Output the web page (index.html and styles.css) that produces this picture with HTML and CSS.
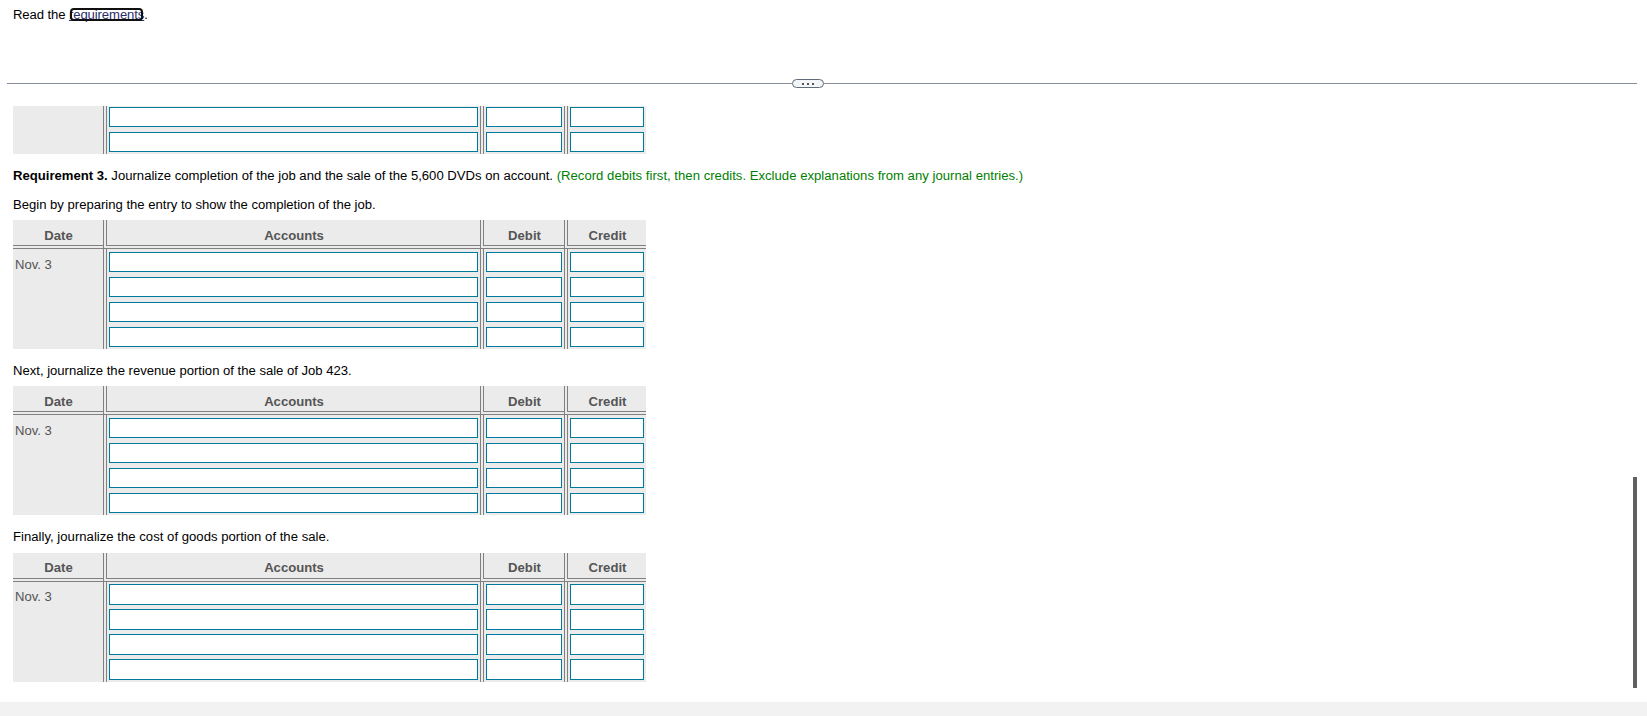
FILE: index.html
```html
<!DOCTYPE html>
<html lang="en">
<head>
  <meta charset="UTF-8">
  <meta name="viewport" content="width=device-width, initial-scale=1.0">
  <title>Journal entries</title>
  <link rel="stylesheet" href="styles.css">
</head>
<body>
  <div class="page">
    <div class="top">
      <p>Read the <a class="link" href="#">requirements</a>.</p>
    </div>
    <div class="divider">
      <span class="line"></span>
      <button class="handle" type="button"><i></i><i></i><i></i></button>
      <span class="line right"></span>
    </div>
    <div class="content">
      <table class="journal cut">
        <tbody>
          <tr><td class="date" rowspan="2"></td><td class="acc"><input type="text"></td><td class="deb"><input type="text"></td><td class="cre"><input type="text"></td></tr>
          <tr><td><input type="text"></td><td><input type="text"></td><td><input type="text"></td></tr>
        </tbody>
      </table>
      <p class="req"><b>Requirement 3.</b> Journalize completion of the job and the sale of the 5,600 DVDs on account. <span class="note">(Record debits first, then credits. Exclude explanations from any journal entries.)</span></p>
      <p class="step">Begin by preparing the entry to show the completion of the job.</p>
      <table class="journal">
        <thead>
          <tr><th class="date">Date</th><th class="acc">Accounts</th><th class="deb">Debit</th><th class="cre">Credit</th></tr>
        </thead>
        <tbody>
          <tr><td class="date" rowspan="4">Nov. 3</td><td><input type="text"></td><td><input type="text"></td><td><input type="text"></td></tr>
          <tr><td><input type="text"></td><td><input type="text"></td><td><input type="text"></td></tr>
          <tr><td><input type="text"></td><td><input type="text"></td><td><input type="text"></td></tr>
          <tr><td><input type="text"></td><td><input type="text"></td><td><input type="text"></td></tr>
        </tbody>
      </table>
      <p class="step">Next, journalize the revenue portion of the sale of Job 423.</p>
      <table class="journal">
        <thead>
          <tr><th class="date">Date</th><th class="acc">Accounts</th><th class="deb">Debit</th><th class="cre">Credit</th></tr>
        </thead>
        <tbody>
          <tr><td class="date" rowspan="4">Nov. 3</td><td><input type="text"></td><td><input type="text"></td><td><input type="text"></td></tr>
          <tr><td><input type="text"></td><td><input type="text"></td><td><input type="text"></td></tr>
          <tr><td><input type="text"></td><td><input type="text"></td><td><input type="text"></td></tr>
          <tr><td><input type="text"></td><td><input type="text"></td><td><input type="text"></td></tr>
        </tbody>
      </table>
      <p class="step last">Finally, journalize the cost of goods portion of the sale.</p>
      <table class="journal tall">
        <thead>
          <tr><th class="date">Date</th><th class="acc">Accounts</th><th class="deb">Debit</th><th class="cre">Credit</th></tr>
        </thead>
        <tbody>
          <tr><td class="date" rowspan="4">Nov. 3</td><td><input type="text"></td><td><input type="text"></td><td><input type="text"></td></tr>
          <tr><td><input type="text"></td><td><input type="text"></td><td><input type="text"></td></tr>
          <tr><td><input type="text"></td><td><input type="text"></td><td><input type="text"></td></tr>
          <tr><td><input type="text"></td><td><input type="text"></td><td><input type="text"></td></tr>
        </tbody>
      </table>
      <div class="scrollbar"></div>
    </div>
    <div class="footer"></div>
  </div>
</body>
</html>
```
FILE: styles.css
```css
*{
  margin: 0;
  padding: 0;
  box-sizing: border-box;
}
body{
  background-color: #fff;
  font-family: "Liberation Sans", Arial, sans-serif;
  font-size: 13.12px;
  line-height: 15px;
  color: #000;
}
.page{
  width: 100%;
  height: 716px;
  overflow: hidden;
  display: flex;
  flex-direction: column;
}
.top{
  height: 79px;
  padding: 7px 13px 0;
  letter-spacing: -0.1px;
}
.link{
  color: #2b2e6b;
  outline: 2px solid #101010;
  outline-offset: -3px;
  border-radius: 5px;
}
.divider{
  height: 9px;
  margin: 0 10px 0 7px;
  display: flex;
  align-items: center;
}
.divider .line{
  width: 785px;
  height: 1px;
  background-color: #868c99;
}
.divider .right{
  flex: 1;
}
.handle{
  width: 32px;
  height: 9px;
  border: 1px solid #5f6b79;
  border-radius: 5px;
  background-color: #f4f5f8;
  display: flex;
  justify-content: center;
  align-items: center;
  gap: 3px;
}
.handle i{
  width: 2px;
  height: 2px;
  background-color: #555;
}
.content{
  height: 614px;
  padding: 18px 13px 0;
  position: relative;
}
.journal{
  width: 633px;
  table-layout: fixed;
  border-collapse: separate;
  border-spacing: 0;
  background-color: #ebebeb;
  color: #555;
}
.journal .date{
  width: 90px;
  border-left: 0;
}
.journal .acc{
  width: 377px;
}
.journal .deb{
  width: 84px;
}
.journal .cre{
  width: 82px;
}
.journal th{
  height: 29px;
  padding: 6px 0 0 1px;
  border-left: 4px double #808080;
  border-bottom: 4px double #808080;
  text-align: center;
}
.journal td{
  height: 25px;
  padding: 3px 2px 2px;
  border-left: 4px double #808080;
  vertical-align: top;
}
.journal td.date{
  padding-top: 8px;
}
.journal input{
  display: block;
  width: 100%;
  height: 20px;
  border: 1px solid #007a9c;
  border-radius: 0;
  background-color: #fff;
}
.journal.cut tr:first-child td{
  height: 23px;
  padding-top: 1px;
}
.journal.tall th{
  padding-top: 4px;
}
.journal.tall td{
  padding-top: 2px;
}
.journal.tall td.date{
  padding-top: 7px;
}
.journal.tall input{
  height: 21px;
}
.req{
  padding-top: 14px;
}
.note{
  color: #008000;
  letter-spacing: 0.02px;
}
.step{
  padding: 14px 0 8px;
  letter-spacing: -0.015px;
}
.last{
  padding-bottom: 9px;
  letter-spacing: 0.02px;
}
.scrollbar{
  width: 4px;
  height: 211px;
  background-color: #606060;
  position: absolute;
  right: 10px;
  bottom: 14px;
}
.footer{
  flex: 1;
  background-color: #f2f2f2;
}
```
